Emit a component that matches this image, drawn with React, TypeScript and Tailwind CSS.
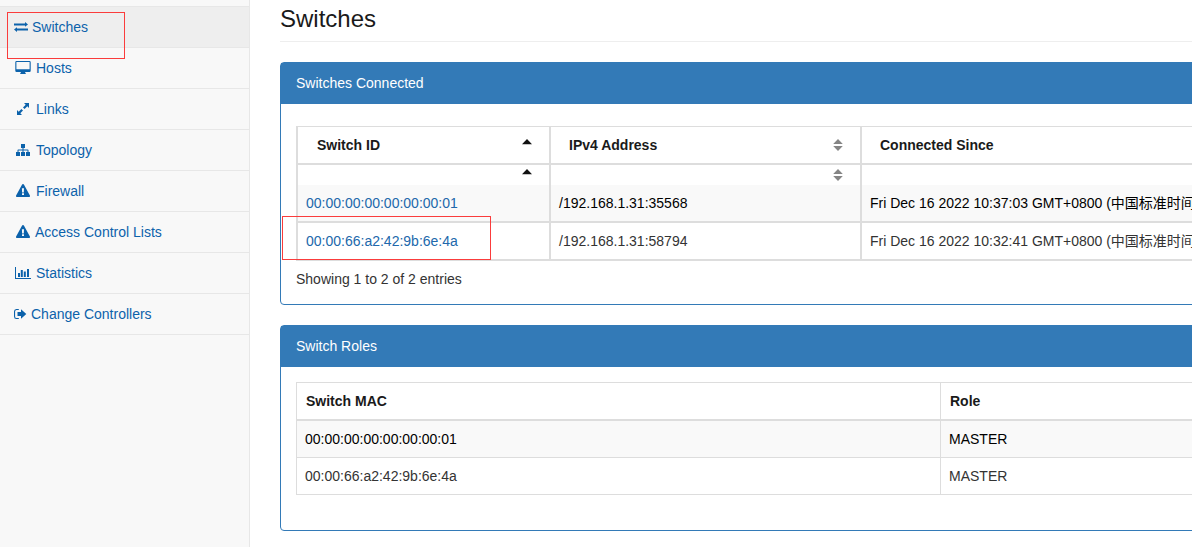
import type { ReactNode } from "react";

const Svg = ({ w, h, children }: { w: number; h: number; children: ReactNode }) => (
  <svg width={w} height={h} viewBox={`0 0 ${w} ${h}`} fill="currentColor" className="shrink-0">
    {children}
  </svg>
);

const Exchange = () => (
  <Svg w={14} h={10}>
    <path d="M0 1.500h11V0L14 2.400 11 4.800V3.400H0zM14 6.600H3V5.200L0 7.600 3 10V8.500H14z" />
  </Svg>
);
const Desktop = () => (
  <Svg w={16} h={14}>
    <path
      fillRule="evenodd"
      d="M1.500 0h13q1.200 0 1.200 1.200v8.600q0 1.200-1.200 1.200h-4.300v.8q.2.500.7.700v.5H5.100v-.5q.5-.2.700-.7V11H1.500Q.3 11 .3 9.800V1.200Q.3 0 1.500 0zM1.400 1v7.300h13.200V1z"
    />
  </Svg>
);
const Expand = () => (
  <Svg w={12} h={12}>
    <path d="M7 0h5v5l-1.700-1.700L7.600 6 6 4.400l2.700-2.700zM5 12H0V7l1.700 1.700L4.400 6 6 7.600l-2.700 2.700z" />
  </Svg>
);
const Sitemap = () => (
  <Svg w={14} h={12}>
    <path d="M5 0h4v4H7.500v1.500h4.200q.8 0 .8.800V8H14v4h-4V8h1.500V6.500h-4V8H9v4H5V8h1.500V6.500h-4V8H4v4H0V8h1.500V6.300q0-.8.800-.8h4.200V4H5z" />
  </Svg>
);
const Warning = () => (
  <Svg w={14} h={14}>
    <path
      fillRule="evenodd"
      d="M7 0q.6 0 .9.500l6 11q.3.600 0 1-.3.500-.9.500H1q-.6 0-.9-.5-.3-.4 0-1l6-11Q6.400 0 7 0zM5.900 4.200l.2 4.200h1.700L8 4.200zM6 9.300v1.800h2V9.300z"
    />
  </Svg>
);
const Chart = () => (
  <Svg w={16} h={12}>
    <path d="M0 0h1v11h15v1H0zM3 6h2v4H3zM5.800 3h2v7h-2zM8.800 4.500h2V10h-2zM12 2h2v8h-2z" />
  </Svg>
);
const SignOut = () => (
  <Svg w={13} h={10}>
    <path d="M4.800 0v1H2.500Q1.100 1 1.100 2.500v5Q1.100 9 2.500 9h2.300v1H2.400Q0 10 0 7.500v-5Q0 0 2.400 0zM7 .2L12.300 5 7 9.800V7H3.500V3H7z" />
  </Svg>
);

const nav = [
  { label: "Switches", icon: <Exchange />, pad: "pl-[14px] gap-[4px]" },
  { label: "Hosts", icon: <Desktop />, pad: "pl-[15px] gap-[5px]" },
  { label: "Links", icon: <Expand />, pad: "pl-[17px] gap-[7px]" },
  { label: "Topology", icon: <Sitemap />, pad: "pl-[16px] gap-[6px]" },
  { label: "Firewall", icon: <Warning />, pad: "pl-[16px] gap-[6px]" },
  { label: "Access Control Lists", icon: <Warning />, pad: "pl-[16px] gap-[5px]" },
  { label: "Statistics", icon: <Chart />, pad: "pl-[15px] gap-[5px]" },
  { label: "Change Controllers", icon: <SignOut />, pad: "pl-[14px] gap-[4px]" },
];

const SortAsc = () => (
  <svg width="10" height="6" viewBox="0 0 10 6" className="ml-auto" fill="#111">
    <path d="M5 0l5 5.200H0z" />
  </svg>
);
const SortBoth = () => (
  <svg width="10" height="12" viewBox="0 0 10 12" className="ml-auto" fill="#858585">
    <path d="M5 0l4.800 5H.2zM.2 7h9.600L5 12z" />
  </svg>
);

const switches = [
  { id: "00:00:00:00:00:00:00:01", ip: "/192.168.1.31:35568", since: "Fri Dec 16 2022 10:37:03 GMT+0800 (中国标准时间)" },
  { id: "00:00:66:a2:42:9b:6e:4a", ip: "/192.168.1.31:58794", since: "Fri Dec 16 2022 10:32:41 GMT+0800 (中国标准时间)" },
];

const Panel = ({ title, className, children }: { title: string; className: string; children: ReactNode }) => (
  <section className={`w-[1000px] rounded-[4px] border border-[#337ab7] ${className}`}>
    <h2 className="h-[41px] bg-[#337ab7] pl-[15px] leading-[41px] text-white">{title}</h2>
    {children}
  </section>
);

export default function App() {
  return (
    <div className="relative flex h-[547px] w-full overflow-hidden bg-white font-['Liberation_Sans','Noto_Sans_CJK_SC',sans-serif] text-[14px] leading-5 text-[#333]">
      <nav className="w-[250px] shrink-0 border-r border-[#e7e7e7] bg-[#f8f8f8] text-[#0c62ab]">
        <div className="h-[7px] border-b border-[#e7e7e7]" />
        {nav.map((n, i) => (
          <a
            key={n.label}
            className={`flex h-[41px] items-center border-b border-[#e7e7e7] ${n.pad} ${i === 0 ? "bg-[#eee]" : ""}`}
          >
            {n.icon}
            <span>{n.label}</span>
          </a>
        ))}
      </nav>

      <main className="min-w-0 flex-1 overflow-hidden pl-[30px]">
        <h1 className="h-[42px] w-[1000px] border-b border-[#eee] pt-[5px] text-[24px] leading-[28px] text-[#1a1a1a]">
          Switches
        </h1>

        <Panel title="Switches Connected" className="mt-5 h-[243px]">
          <table className="mt-[22px] ml-[15px] w-[968px] table-fixed border-separate border-spacing-0 border-t border-l-2 border-[#ddd] text-left">
            <colgroup>
              <col className="w-[253px]" />
              <col className="w-[311px]" />
              <col />
            </colgroup>
            <thead>
              <tr className="h-[38px] text-[#1a1a1a]">
                <th className="border-r-2 border-b-2 border-[#ddd] p-0">
                  <div className="flex h-[36px] pt-[8px] pr-[17px] pl-[19px]">
                    Switch ID
                    <span className="ml-auto pt-[4px]"><SortAsc /></span>
                  </div>
                </th>
                <th className="border-r-2 border-b-2 border-[#ddd] p-0">
                  <div className="flex h-[36px] pt-[8px] pr-[17px] pl-[18px]">
                    IPv4 Address
                    <span className="ml-auto pt-[4px]"><SortBoth /></span>
                  </div>
                </th>
                <th className="border-b-2 border-[#ddd] p-0">
                  <div className="h-[36px] pt-[8px] pl-[18px]">Connected Since</div>
                </th>
              </tr>
              <tr className="h-[20px]">
                <th className="border-r-2 border-[#ddd] p-0">
                  <div className="flex h-[20px] pt-[4px] pr-[17px]"><SortAsc /></div>
                </th>
                <th className="border-r-2 border-[#ddd] p-0">
                  <div className="flex h-[20px] pt-[4px] pr-[17px]"><SortBoth /></div>
                </th>
                <th className="p-0" />
              </tr>
            </thead>
            <tbody>
              {switches.map((s, i) => (
                <tr key={s.id} className={`h-[38px] ${i === 0 ? "bg-[#f9f9f9] text-black" : ""}`}>
                  <td className="border-r-2 border-b-2 border-[#ddd] p-0 pl-[8px] text-[#2168ab]">{s.id}</td>
                  <td className="border-r-2 border-b-2 border-[#ddd] p-0 pl-[8px]">{s.ip}</td>
                  <td className="border-b-2 border-[#ddd] p-0 pl-[8px] whitespace-nowrap">{s.since}</td>
                </tr>
              ))}
            </tbody>
          </table>
          <p className="mt-[8px] pl-[15px]">Showing 1 to 2 of 2 entries</p>
        </Panel>

        <Panel title="Switch Roles" className="mt-5 h-[206px]">
          <table className="mt-[15px] ml-[15px] w-[968px] table-fixed border-separate border-spacing-0 border-t border-l border-[#ddd] text-left">
            <colgroup>
              <col className="w-[644px]" />
              <col />
            </colgroup>
            <thead>
              <tr className="h-[38px] text-[#1a1a1a]">
                <th className="border-r border-b-2 border-[#ddd] p-0 pl-[9px]">Switch MAC</th>
                <th className="border-b-2 border-[#ddd] p-0 pl-[9px]">Role</th>
              </tr>
            </thead>
            <tbody>
              {switches.map((s, i) => (
                <tr key={s.id} className={`h-[37px] ${i === 0 ? "bg-[#f9f9f9] text-black" : ""}`}>
                  <td className="border-r border-b border-[#ddd] p-0 pl-[8px]">{s.id}</td>
                  <td className="border-b border-[#ddd] p-0 pl-[8px]">MASTER</td>
                </tr>
              ))}
            </tbody>
          </table>
        </Panel>
      </main>

      <div className="pointer-events-none absolute top-[12px] left-[7px] h-[47px] w-[118px] border border-[#fa3c3c]" />
      <div className="pointer-events-none absolute top-[216px] left-[282px] h-[44px] w-[209px] border border-[#fa3c3c]" />
    </div>
  );
}
